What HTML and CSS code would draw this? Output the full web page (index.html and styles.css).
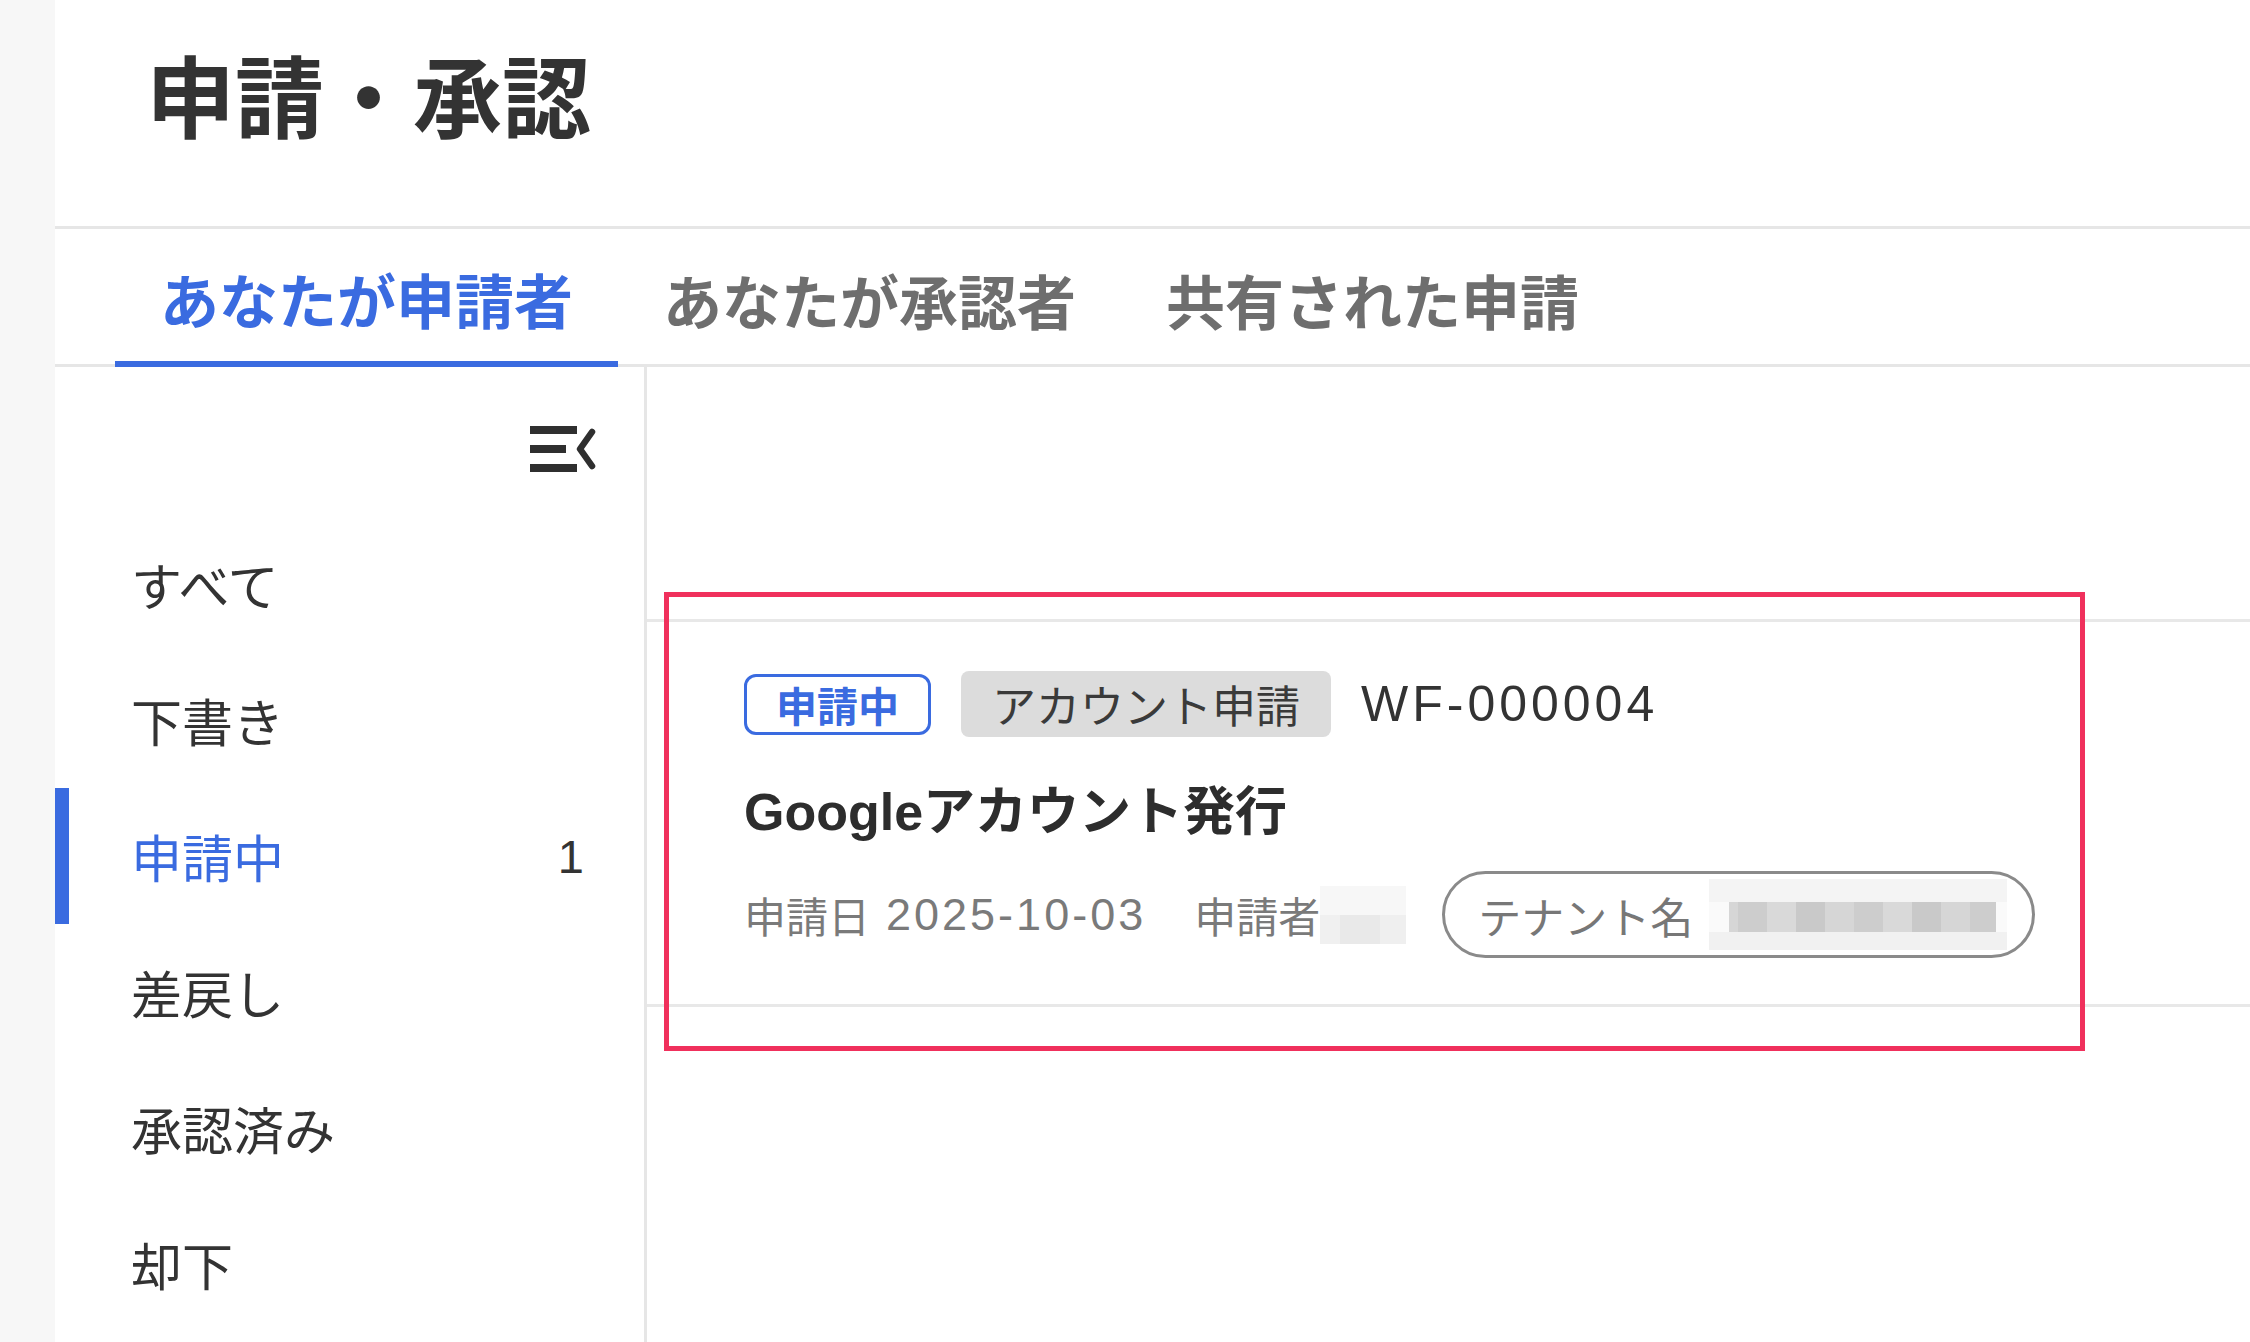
FILE: index.html
```html
<!DOCTYPE html>
<html lang="ja">
<head>
    <meta charset="UTF-8">
    <title>申請・承認</title>
    <link rel="stylesheet" href="styles.css">
</head>
<body>
<div class="app">
    <div class="rail"></div>

    <div class="page">
        <header class="page-head">
            <h1>申請・承認</h1>
        </header>

        <!-- Role tabs -->
        <nav class="tabs">
            <a href="#" class="tab active">あなたが申請者</a>
            <a href="#" class="tab">あなたが承認者</a>
            <a href="#" class="tab">共有された申請</a>
        </nav>

        <div class="workspace">
            <aside class="sidebar">
                <div class="sidebar-top">
                    <button class="collapse-btn" aria-label="折りたたむ">
                        <svg width="66" height="46" viewBox="0 0 66 46">
                            <rect x="0" y="0" width="47" height="8" fill="#2f2f2f"/>
                            <rect x="0" y="19" width="36" height="8" fill="#2f2f2f"/>
                            <rect x="0" y="38" width="47" height="8" fill="#2f2f2f"/>
                            <polyline points="62,6 50,23 62,40" fill="none" stroke="#2f2f2f" stroke-width="6.5" stroke-linecap="round" stroke-linejoin="round"/>
                        </svg>
                    </button>
                </div>
                <ul class="status-list">
                    <li>すべて</li>
                    <li>下書き</li>
                    <li class="active"><span>申請中</span><span class="count">1</span></li>
                    <li>差戻し</li>
                    <li>承認済み</li>
                    <li>却下</li>
                </ul>
            </aside>

            <main class="content">
                <ul class="request-list">
                    <li class="request">
                        <div class="request-head">
                            <span class="badge">申請中</span>
                            <span class="tag">アカウント申請</span>
                            <span class="request-id">WF-000004</span>
                        </div>
                        <div class="request-title">Googleアカウント発行</div>
                        <div class="request-meta">
                            <span class="meta-item">申請日 <span class="num">2025-10-03</span></span>
                            <span class="meta-item">申請者<span class="mosaic mosaic-small"></span></span>
                            <span class="tenant">テナント名<span class="mosaic mosaic-wide"></span></span>
                        </div>
                    </li>
                </ul>
                <!-- red highlight frame -->
                <div class="highlight"></div>
            </main>
        </div>
    </div>
</div>
</body>
</html>
```

FILE: styles.css
```css
:root {
    --blue: #3a6be0;
    --line: #e6e6e6;
    --text: #333;
    --muted: #7a7a7a;
}

html, body {
    margin: 0;
    padding: 0;
    height: 100%;
    font-family: "Liberation Sans", "Noto Sans CJK JP", sans-serif;
    color: var(--text);
    background: #fff;
    overflow: hidden;
}

.app {
    display: flex;
    height: 100vh;
}

.rail {
    width: 55px;
    flex-shrink: 0;
    background: #f7f7f7;
}

.page {
    flex: 1;
    display: flex;
    flex-direction: column;
    min-width: 0;
}

/* Header */
.page-head {
    height: 229px;
    box-sizing: border-box;
    border-bottom: 3px solid var(--line);
    padding: 50px 0 0 91px;
}

.page-head h1 {
    margin: 0;
    font-size: 89px;
    line-height: 100px;
    font-weight: bold;
    color: #333;
}

/* Tabs */
.tabs {
    display: flex;
    height: 138px;
    box-sizing: border-box;
    border-bottom: 3px solid var(--line);
    padding-left: 60px;
}

.tab {
    display: flex;
    align-items: center;
    padding: 6px 45px 0;
    font-size: 59px;
    font-weight: bold;
    color: #6e6e6e;
    text-decoration: none;
}

.tab.active {
    color: var(--blue);
    border-bottom: 6px solid var(--blue);
    margin-bottom: -3px;
}

/* Workspace */
.workspace {
    flex: 1;
    display: flex;
    min-height: 0;
}

.sidebar {
    width: 592px;
    flex-shrink: 0;
    box-sizing: border-box;
    border-right: 3px solid var(--line);
}

.sidebar-top {
    height: 149px;
    display: flex;
    justify-content: flex-end;
    align-items: flex-start;
    padding: 59px 48px 0 0;
    box-sizing: border-box;
}

.collapse-btn {
    border: none;
    background: none;
    padding: 0;
    cursor: pointer;
    line-height: 0;
}

.status-list {
    list-style: none;
    margin: 0;
    padding: 0;
}

.status-list li {
    height: 136px;
    display: flex;
    align-items: center;
    justify-content: space-between;
    padding: 0 60px 0 76px;
    font-size: 51px;
    color: var(--text);
}

.status-list li.active {
    color: var(--blue);
    box-shadow: inset 14px 0 0 var(--blue);
}

.status-list .count {
    color: var(--text);
    font-size: 47px;
}

/* Request list */
.content {
    flex: 1;
    position: relative;
    padding-top: 252px;
}

.request-list {
    list-style: none;
    margin: 0;
    padding: 0;
    border-top: 3px solid #e8e8e8;
}

.request {
    height: 385px;
    box-sizing: border-box;
    border-bottom: 3px solid #e8e8e8;
    padding: 49px 0 0 97px;
}

.request-head {
    display: flex;
    align-items: center;
    height: 66px;
    gap: 30px;
}

.badge {
    height: 61px;
    box-sizing: border-box;
    display: flex;
    align-items: center;
    padding: 0 29px;
    border: 3px solid var(--blue);
    border-radius: 12px;
    color: var(--blue);
    font-size: 41px;
    font-weight: bold;
}

.tag {
    height: 66px;
    display: flex;
    align-items: center;
    padding: 0 31px;
    background: #dcdcdc;
    border-radius: 8px;
    font-size: 44px;
    color: #3a3a3a;
}

.request-id {
    font-size: 50px;
    letter-spacing: 4px;
    color: #333;
}

.request-title {
    margin-top: 45px;
    font-size: 52px;
    line-height: 60px;
    font-weight: bold;
    color: #2d2d2d;
}

.request-meta {
    margin-top: 29px;
    display: flex;
    align-items: center;
    height: 87px;
    color: var(--muted);
    font-size: 42px;
}

.meta-item {
    display: flex;
    align-items: center;
    margin-right: 48px;
}

.meta-item:nth-child(2) {
    margin-right: 36px;
}

.num {
    font-size: 45px;
    letter-spacing: 3px;
    margin-left: 16px;
}

.tenant {
    height: 87px;
    width: 593px;
    box-sizing: border-box;
    display: flex;
    align-items: center;
    border: 3px solid #8a8a8a;
    border-radius: 44px;
    padding: 0 0 0 33px;
    font-size: 43px;
    color: #777;
}

/* blurred names */
.mosaic {
    display: inline-block;
}

.mosaic-small {
    width: 86px;
    height: 58px;
    background:
        linear-gradient(to bottom, #f7f7f7 0 50%, transparent 50%),
        linear-gradient(to right, #f0f0f0 0 20px, #e9e9e9 20px 60px, #efefef 60px);
}

.mosaic-wide {
    width: 298px;
    height: 71px;
    margin-left: 16px;
    background:
        linear-gradient(to bottom, #f4f4f4 0 33%, transparent 33% 75%, #f1f1f1 75%),
        linear-gradient(to right, #fafafa 0 20px, transparent 20px 287px, #fafafa 287px),
        repeating-linear-gradient(to right, #d6d6d6 0 29px, #cdcdcd 29px 58px, #d9d9d9 58px 87px, #c9c9c9 87px 116px);
}

.highlight {
    position: absolute;
    left: 17px;
    top: 225px;
    width: 1421px;
    height: 459px;
    box-sizing: border-box;
    border: 5px solid #f0305c;
    pointer-events: none;
}
```
